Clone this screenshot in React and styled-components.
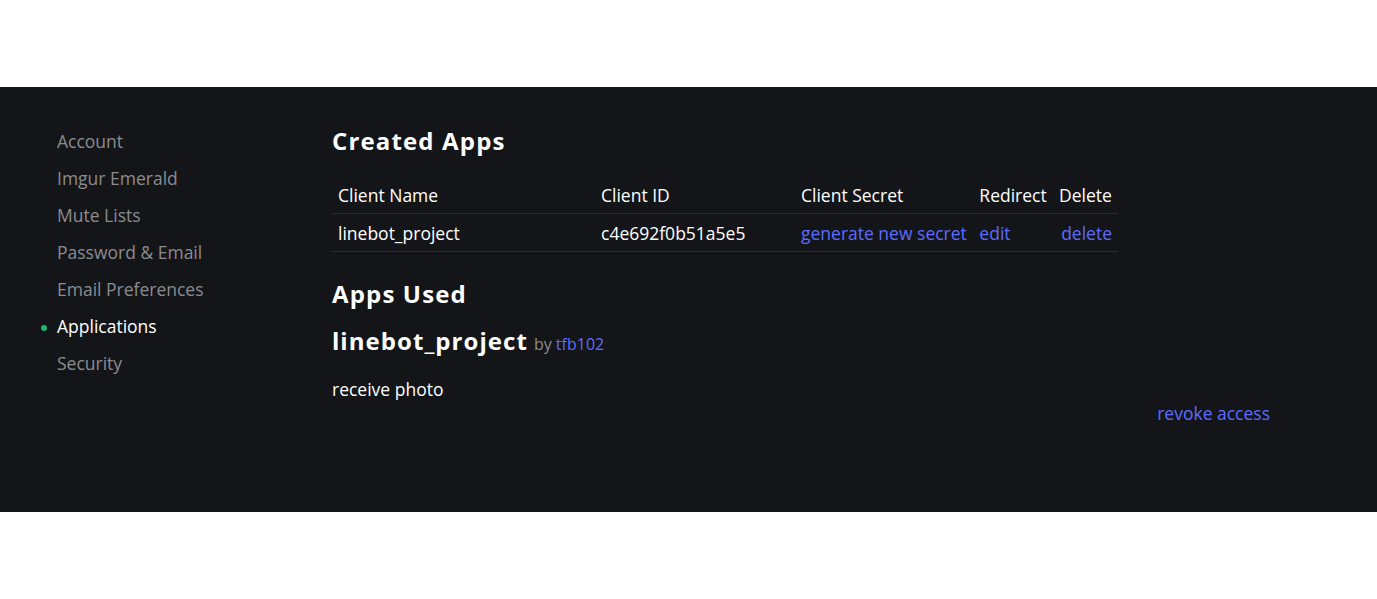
import React from "react";
import styled, { createGlobalStyle } from "styled-components";

const Global = createGlobalStyle`
  html, body { margin: 0; padding: 0; background: #fff; }
  body { font-family: "Open Sans", "Noto Sans", sans-serif; }
`;

const Page = styled.div`
  padding-top: 87px;
  padding-bottom: 87px;
`;

const Band = styled.div`
  background: #141518;
  height: 425px;
  box-sizing: border-box;
  padding: 38px 107px 0 57px;
  display: flex;
`;

const Side = styled.nav`
  width: 275px;
  flex-shrink: 0;
  display: flex;
  flex-direction: column;
  gap: 11px;
  padding-top: 3px;
`;

const NavItem = styled.a`
  position: relative;
  font-size: 17.5px;
  line-height: 26px;
  color: ${p => (p.$active ? "#ffffff" : "#8b8c90")};
  text-decoration: none;
  ${p =>
    p.$active &&
    `&::before {
      content: "";
      position: absolute;
      left: -16px;
      top: 12px;
      width: 6px;
      height: 6px;
      border-radius: 50%;
      background: #1bb76e;
    }`}
`;

const Main = styled.main`
  flex: 1;
  display: flex;
  flex-direction: column;
`;

const H2 = styled.h2`
  margin: 0;
  font-size: 24px;
  font-weight: 700;
  letter-spacing: 1.15px;
  line-height: 32px;
  color: #fff;
`;

const Table = styled.table`
  border-collapse: collapse;
  width: 786px;
  margin-top: 19px;
  margin-bottom: 26px;
`;

const Th = styled.th`
  text-align: left;
  font-weight: 400;
  font-size: 17.5px;
  color: #fff;
  padding: 0 6px;
  height: 37px;
  vertical-align: middle;
  border-bottom: 1px solid #2a2c30;
  white-space: nowrap;
  width: ${p => p.$w || "auto"};
`;

const Td = styled.td`
  font-size: 17.5px;
  color: ${p => (p.$link ? "#5d6cff" : "#fff")};
  padding: 0 6px;
  height: 37px;
  border-bottom: 1px solid #2a2c30;
  white-space: nowrap;
  text-align: ${p => (p.$right ? "right" : "left")};
`;

const AppTitle = styled.div`
  margin-top: 15px;
  display: flex;
  align-items: baseline;
  gap: 6px;
`;

const AppName = styled.span`
  font-size: 24px;
  font-weight: 700;
  letter-spacing: 1.05px;
  color: #fff;
  line-height: 32px;
`;

const By = styled.span`
  font-size: 16px;
  color: #8b8c90;
`;

const Link = styled.a`
  color: #5d6cff;
  text-decoration: none;
`;

const Desc = styled.p`
  margin: 20px 0 0;
  font-size: 17.5px;
  color: #fff;
  line-height: 24px;
`;

const Revoke = styled.div`
  text-align: right;
  font-size: 17.5px;
  line-height: 24px;
`;

const navItems = [
  "Account",
  "Imgur Emerald",
  "Mute Lists",
  "Password & Email",
  "Email Preferences",
  "Applications",
  "Security",
];

export default function App() {
  return (
    <Page>
      <Global />
      <Band>
        <Side>
          {navItems.map(n => (
            <NavItem key={n} $active={n === "Applications"}>
              {n}
            </NavItem>
          ))}
        </Side>
        <Main>
          <H2>Created Apps</H2>
          <Table>
            <thead>
              <tr>
                <Th $w="251px">Client Name</Th>
                <Th $w="188px">Client ID</Th>
                <Th>Client Secret</Th>
                <Th>Redirect</Th>
                <Th>Delete</Th>
              </tr>
            </thead>
            <tbody>
              <tr>
                <Td>linebot_project</Td>
                <Td>c4e692f0b51a5e5</Td>
                <Td $link>generate new secret</Td>
                <Td $link>edit</Td>
                <Td $link $right>delete</Td>
              </tr>
            </tbody>
          </Table>
          <H2>Apps Used</H2>
          <AppTitle>
            <AppName>linebot_project</AppName>
            <By>
              by <Link>tfb102</Link>
            </By>
          </AppTitle>
          <Desc>receive photo</Desc>
          <Revoke>
            <Link>revoke access</Link>
          </Revoke>
        </Main>
      </Band>
    </Page>
  );
}
